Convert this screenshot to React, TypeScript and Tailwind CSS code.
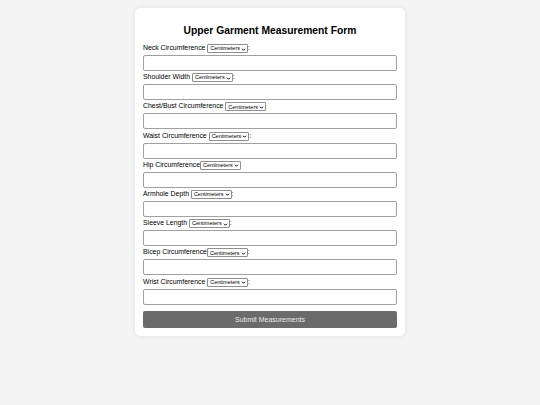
import React from 'react';

interface Field {
  label: string;
  space: boolean;
  colon: boolean;
}

const fields: Field[] = [
  { label: 'Neck Circumference', space: true, colon: true },
  { label: 'Shoulder Width', space: true, colon: true },
  { label: 'Chest/Bust Circumference', space: true, colon: false },
  { label: 'Waist Circumference', space: true, colon: true },
  { label: 'Hip Circumference', space: false, colon: false },
  { label: 'Armhole Depth', space: true, colon: true },
  { label: 'Sleeve Length', space: true, colon: true },
  { label: 'Bicep Circumference', space: false, colon: true },
  { label: 'Wrist Circumference', space: true, colon: true },
];

function UnitSelect() {
  return (
    <span className="inline-flex items-center h-[9px] pl-[2px] pr-[1px] pt-[1px] border border-[#8f8f8f] rounded-[1px] bg-white text-[5.5px] leading-none text-black gap-[1px]">
      Centimeters
      <svg className="w-[5px] h-[5px]" viewBox="0 0 10 10" fill="none" stroke="black" strokeWidth={2}>
        <path d="M2 3.5l3 3 3-3" />
      </svg>
    </span>
  );
}

export default function App() {
  return (
    <div className="min-h-[405px] bg-[#f4f4f4] pt-[8px] font-['Liberation_Sans',Arial,sans-serif]">
      <div className="w-[270px] mx-auto bg-white rounded-[5px] shadow-[0_0_5px_rgba(0,0,0,0.08)] p-[8px]">
        <h2 className="mt-[8px] mb-[7px] text-center text-[10.3px] leading-[13px] font-bold text-black">
          Upper Garment Measurement Form
        </h2>
        {fields.map((f) => (
          <div key={f.label} className="mb-[2.2px]">
            <div className="flex items-center h-[9px] text-[6.9px] leading-none text-black whitespace-pre">
              {f.label}
              {f.space ? ' ' : ''}
              <UnitSelect />
              {f.colon ? ':' : ''}
            </div>
            <div className="mt-[2px] h-[16px] border border-[#a0a0a0] rounded-[2px] bg-white" />
          </div>
        ))}
        <button className="block mt-[6px] w-full h-[17.5px] bg-[#6b6b6b] rounded-[2px] text-[7px] leading-none text-[#e8e8e8]">
          Submit Measurements
        </button>
      </div>
    </div>
  );
}
